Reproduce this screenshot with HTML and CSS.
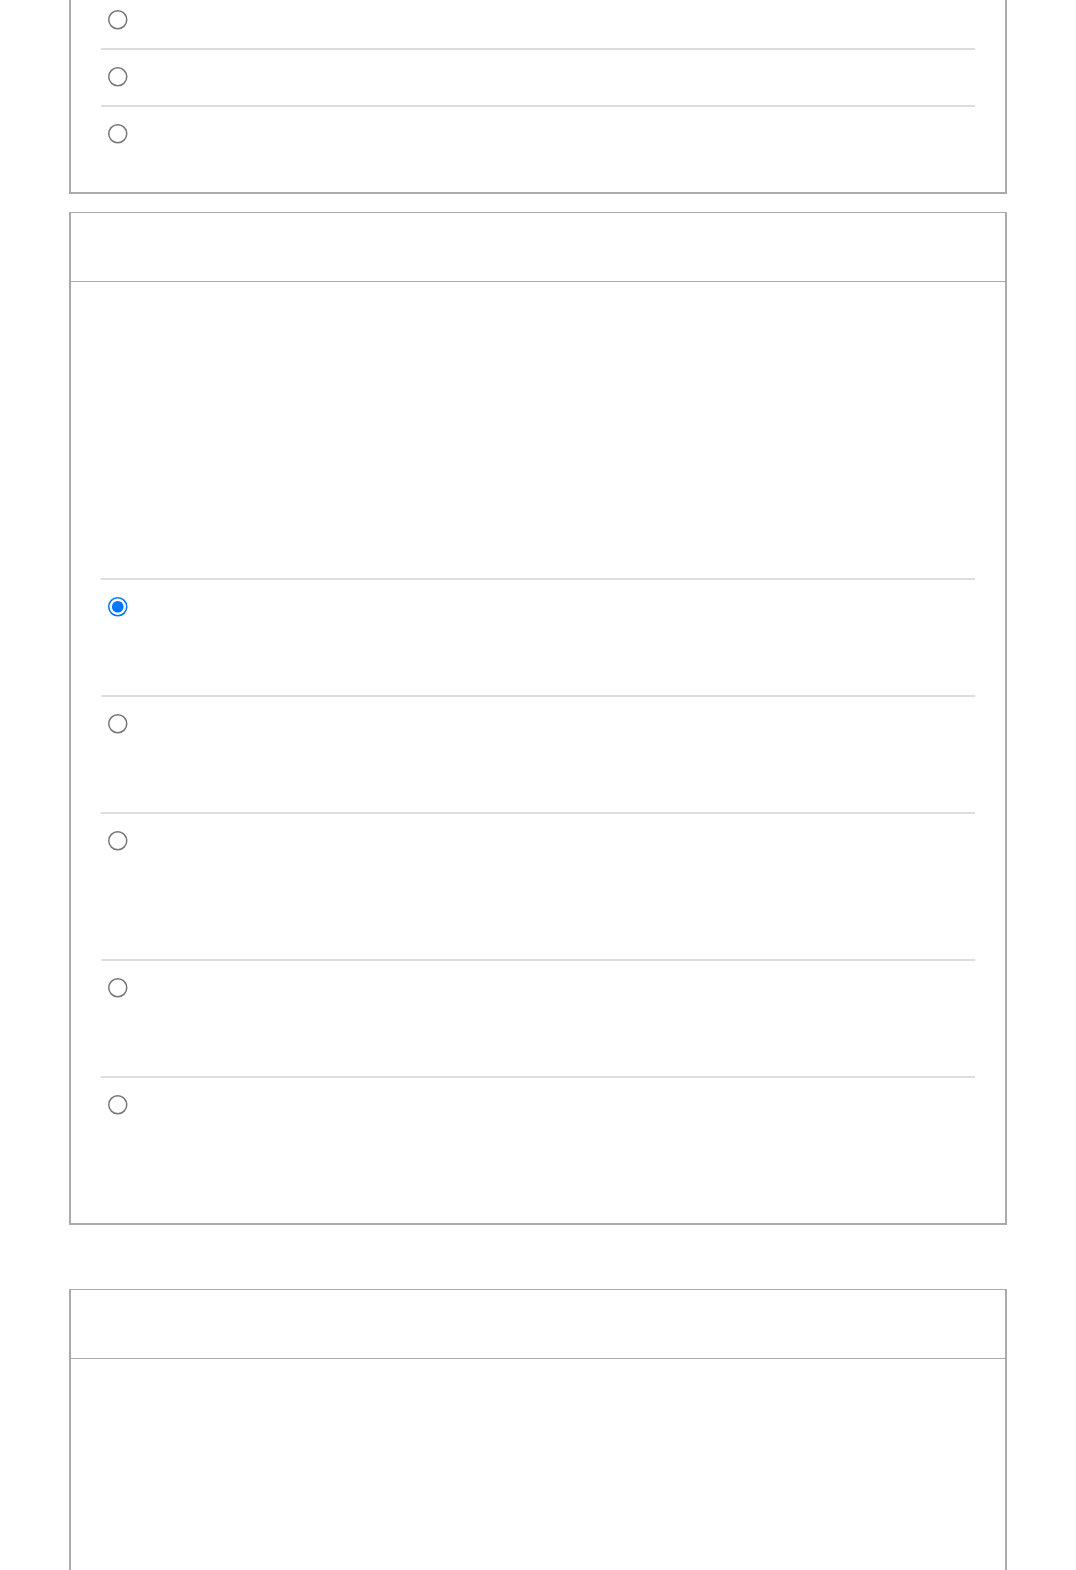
FILE: index.html
```html
<!DOCTYPE html>
<html lang="en">
<head>
    <meta charset="UTF-8">
    <meta name="viewport" content="width=device-width, initial-scale=1.0">
    <title>Quiz</title>
    <link rel="stylesheet" href="styles.css">
</head>
<body>
    <div class="page">
        <!-- question card, scrolled past its top -->
        <div class="card card-cut">
            <div class="card-body">
                <label class="option option-first"><input type="radio" name="q1"><span class="option-text"></span></label>
                <label class="option"><input type="radio" name="q1"><span class="option-text"></span></label>
                <label class="option"><input type="radio" name="q1"><span class="option-text"></span></label>
            </div>
        </div>

        <div class="card">
            <div class="card-header"></div>
            <div class="card-body">
                <div class="question"></div>
                <label class="option"><input type="radio" name="q2" checked><span class="option-text tall"></span></label>
                <label class="option"><input type="radio" name="q2"><span class="option-text tall"></span></label>
                <label class="option"><input type="radio" name="q2"><span class="option-text taller"></span></label>
                <label class="option"><input type="radio" name="q2"><span class="option-text tall"></span></label>
                <label class="option"><input type="radio" name="q2"><span class="option-text tall"></span></label>
            </div>
        </div>

        <div class="card card-next">
            <div class="card-header"></div>
            <div class="card-body">
                <div class="question"></div>
            </div>
        </div>
    </div>
</body>
</html>
```

FILE: styles.css
```css
body {
    margin: 0;
    background: #ffffff;
    font-family: 'Liberation Sans', Arial, sans-serif;
    color: #ffffff;
}
.page {
    padding: 0 69px;
}
.card {
    background: #ffffff;
    border: solid #aaaaaa;
    border-width: 1px 2px 2px 2px;
    margin-bottom: 18px;
}
.card-cut {
    border-top: none;
}
.card-next {
    margin-top: 64px;
}
.card-header {
    height: 68px;
    border-bottom: 1px solid #aaaaaa;
}
.card-body {
    padding: 0 30px 30px 30px;
}
.question {
    height: 296px;
}
.option {
    display: flex;
    align-items: flex-start;
    gap: 12px;
    padding: 17px 0 18px 7px;
    border-top: 2px solid #dddddd;
}
.option-first {
    border-top: none;
    padding-top: 10px;
}
.option input {
    width: 13.33px;
    height: 13.33px;
    margin: 0;
    zoom: 1.5;
    flex-shrink: 0;
}
.option-text {
    min-height: 20px;
}
.option-text.tall {
    min-height: 80px;
}
.option-text.taller {
    min-height: 110px;
}
.card-next .question {
    height: 400px;
}
```
